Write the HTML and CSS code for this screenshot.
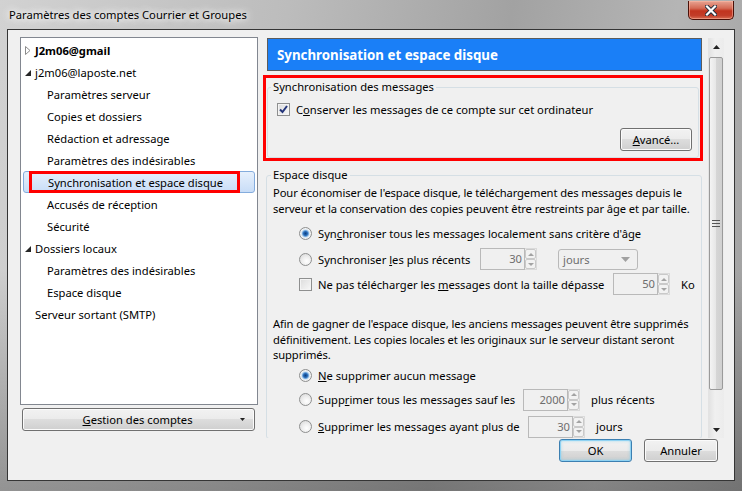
FILE: index.html
```html
<!DOCTYPE html>
<html lang="fr">
<head>
    <meta charset="UTF-8">
    <title>Paramètres des comptes Courrier et Groupes</title>
    <link rel="stylesheet" href="styles.css">
</head>
<body>
<div class="window">
    <!-- Title bar -->
    <div class="titlebar">
        <span class="title">Paramètres des comptes Courrier et Groupes</span>
        <div class="close-btn">
            <svg width="12" height="11" viewBox="0 0 12 11">
                <path d="M2 1.5 L10 9.5 M10 1.5 L2 9.5" stroke="#1e2a3a" stroke-width="4" stroke-linecap="square"/>
                <path d="M2 1.5 L10 9.5 M10 1.5 L2 9.5" stroke="#fff" stroke-width="2.2" stroke-linecap="square"/>
            </svg>
        </div>
    </div>

    <div class="client">
        <div class="main">
            <!-- Left side: account tree -->
            <div class="left-side">
                <ul class="tree">
                    <li class="row lvl0 bold">
                        <svg class="twisty" width="6" height="9" viewBox="0 0 6 9"><path d="M0.5 0.5 L5 4.5 L0.5 8.5 Z" fill="#fff" stroke="#8c8c8c"/></svg>
                        J2m06@gmail
                    </li>
                    <li class="row lvl0">
                        <svg class="twisty" width="6" height="9" viewBox="0 0 6 9"><path d="M6 2 L6 8 L0 8 Z" fill="#262626"/></svg>
                        j2m06@laposte.net
                    </li>
                    <li class="row lvl1">Paramètres serveur</li>
                    <li class="row lvl1">Copies et dossiers</li>
                    <li class="row lvl1">Rédaction et adressage</li>
                    <li class="row lvl1">Paramètres des indésirables</li>
                    <li class="row selected"><span class="mark">Synchronisation et espace disque</span></li>
                    <li class="row lvl1">Accusés de réception</li>
                    <li class="row lvl1">Sécurité</li>
                    <li class="row lvl0">
                        <svg class="twisty" width="6" height="9" viewBox="0 0 6 9"><path d="M6 2 L6 8 L0 8 Z" fill="#262626"/></svg>
                        Dossiers locaux
                    </li>
                    <li class="row lvl1">Paramètres des indésirables</li>
                    <li class="row lvl1">Espace disque</li>
                    <li class="row lvl0 plain">Serveur sortant (SMTP)</li>
                </ul>
                <button class="btn menu-btn">
                    <span class="menu-label"><u>G</u>estion des comptes</span>
                    <svg width="5" height="3" viewBox="0 0 5 3"><path d="M0 0 L5 0 L2.5 3 Z" fill="#222"/></svg>
                </button>
            </div>

            <!-- Right side: settings pane -->
            <div class="right-side">
                <div class="pane">
                    <div class="pane-header">Synchronisation et espace disque</div>

                    <div class="highlight-box">
                        <fieldset class="group sync">
                            <legend>Synchronisation des messages</legend>
                            <div class="opt-row short">
                                <span class="checkbox checked">
                                    <svg width="11" height="11" viewBox="0 0 11 11"><path d="M2 5.5 L4.5 8 L9 2" fill="none" stroke="#24357a" stroke-width="2"/></svg>
                                </span>
                                <span>C<u>o</u>nserver les messages de ce compte sur cet ordinateur</span>
                            </div>
                            <div class="btn-row">
                                <button class="btn adv-btn"><u>A</u>vancé...</button>
                            </div>
                        </fieldset>
                    </div>

                    <fieldset class="group disk">
                        <legend>Espace disque</legend>
                        <p class="desc">Pour économiser de l'espace disque, le téléchargement des messages depuis le<br>serveur et la conservation des copies peuvent être restreints par âge et par taille.</p>
                        <div class="options">
                            <div class="opt-row r1">
                                <span class="radio checked"></span>
                                <span>Syn<u>c</u>hroniser tous les messages localement sans critère d'âge</span>
                            </div>
                            <div class="opt-row r2">
                                <span class="radio"></span>
                                <span class="lbl w-recent">Synchroniser <u>l</u>es plus récents</span>
                                <div class="spin"><span class="spin-val">30</span><span class="spin-btns"><span class="sb up"></span><span class="sb down"></span></span></div>
                                <div class="select"><span>jours</span><svg width="9" height="5" viewBox="0 0 9 5"><path d="M0 0 L9 0 L4.5 5 Z" fill="#a0a0a0"/></svg></div>
                            </div>
                            <div class="opt-row r3">
                                <span class="checkbox"></span>
                                <span class="lbl w-size">Ne pas télécharger les <u>m</u>essages dont la taille dépasse</span>
                                <div class="spin"><span class="spin-val">50</span><span class="spin-btns"><span class="sb up"></span><span class="sb down"></span></span></div>
                                <span class="unit">Ko</span>
                            </div>
                        </div>
                        <p class="desc desc2">Afin de gagner de l'espace disque, les anciens messages peuvent être supprimés<br>définitivement. Les copies locales et les originaux sur le serveur distant seront<br>supprimés.</p>
                        <div class="options">
                            <div class="opt-row d1">
                                <span class="radio checked"></span>
                                <span><u>N</u>e supprimer aucun message</span>
                            </div>
                            <div class="opt-row d2">
                                <span class="radio"></span>
                                <span class="lbl w-keep">Supp<u>r</u>imer tous les messages sauf les</span>
                                <div class="spin"><span class="spin-val">2000</span><span class="spin-btns"><span class="sb up"></span><span class="sb down"></span></span></div>
                                <span class="unit">plus récents</span>
                            </div>
                            <div class="opt-row d3">
                                <span class="radio"></span>
                                <span class="lbl w-older"><u>S</u>upprimer les messages ayant plus de</span>
                                <div class="spin"><span class="spin-val">30</span><span class="spin-btns"><span class="sb up"></span><span class="sb down"></span></span></div>
                                <span class="unit">jours</span>
                            </div>
                        </div>
                    </fieldset>
                </div>

                <div class="scrollbar">
                    <div class="sc-btn"><svg width="7" height="4" viewBox="0 0 7 4"><path d="M0 4 L7 4 L3.5 0 Z" fill="#222"/></svg></div>
                    <div class="thumb">
                        <svg width="8" height="7" viewBox="0 0 8 7"><path d="M0 0.5 H8 M0 3.5 H8 M0 6.5 H8" stroke="#555"/></svg>
                    </div>
                    <div class="sc-btn"><svg width="7" height="4" viewBox="0 0 7 4"><path d="M0 0 L7 0 L3.5 4 Z" fill="#222"/></svg></div>
                </div>
            </div>
        </div>

        <div class="footer">
            <button class="btn default ok-btn">OK</button>
            <button class="btn cancel-btn">Annuler</button>
        </div>
    </div>
</div>
</body>
</html>
```

FILE: styles.css
```css
html, body {
    margin: 0;
    padding: 0;
}

body {
    width: 742px;
    height: 491px;
    overflow: hidden;
    font-family: "Noto Sans", "Open Sans", sans-serif;
    font-size: 11.2px;
    color: #000;
}

.window {
    height: 491px;
    display: flex;
    flex-direction: column;
    background:
        linear-gradient(to bottom, rgba(0, 0, 0, 0) 55%, rgba(0, 0, 0, 0.28) 100%),
        linear-gradient(100deg, #d2d2d2 0%, #bcbcbc 35%, #a2a2a2 62%, #b5b5b5 82%, #9e9e9e 100%);
}

/* title bar */
.titlebar {
    height: 29px;
    display: flex;
    align-items: flex-start;
    justify-content: space-between;
}

.title {
    margin: 7px 0 0 9px;
    line-height: 15px;
    text-shadow: 0 0 6px #fff, 0 0 10px #fff, 0 0 14px rgba(255, 255, 255, 0.9);
}

.close-btn {
    width: 46px;
    height: 19px;
    margin: 1px 8px 0 0;
    box-sizing: border-box;
    border: 1px solid #4a1008;
    border-top: none;
    border-radius: 0 0 5px 5px;
    background: linear-gradient(to bottom, #e8a493 0%, #d46a55 40%, #c2341f 55%, #c23c28 80%, #d76c52 100%);
    box-shadow: inset 0 0 0 1px rgba(255, 190, 170, 0.5);
    display: flex;
    align-items: center;
    justify-content: center;
}

/* dialog body */
.client {
    margin: 0 7px 10px 7px;
    height: 452px;
    box-sizing: border-box;
    border: 1px solid #353535;
    background-color: #f0f0f0;
    display: flex;
    flex-direction: column;
}

.main {
    display: flex;
    padding: 7px 0 0 12px;
    height: 401px;
    box-sizing: border-box;
}

.left-side {
    width: 238px;
    display: flex;
    flex-direction: column;
}

.tree {
    list-style: none;
    margin: 0;
    padding: 1px 1px;
    height: 372px;
    box-sizing: border-box;
    border: 1px solid #828790;
    background-color: #fff;
}

.row {
    height: 22px;
    display: flex;
    align-items: center;
    white-space: nowrap;
    box-sizing: border-box;
}

.row.lvl0 {
    padding-left: 3px;
}

.row.lvl0.plain {
    padding-left: 13px;
}

.row.lvl1 {
    padding-left: 25px;
}

.row.bold {
    font-weight: bold;
}

.twisty {
    margin-right: 4px;
    flex-shrink: 0;
}

.row.selected {
    margin: 0 1px;
    border: 1px solid #84acdd;
    border-radius: 3px;
    background: linear-gradient(to bottom, #e6f0fc, #c8ddf7);
}

.mark {
    margin-left: 5px;
    width: 211px;
    height: 22px;
    box-sizing: border-box;
    border: 3px solid #ff0000;
    padding-left: 16px;
    display: flex;
    align-items: center;
}

/* buttons */
.btn {
    font: inherit;
    color: #000;
    border: 1px solid #707070;
    border-radius: 3px;
    background: linear-gradient(to bottom, #f2f2f2 0%, #ebebeb 50%, #dddddd 50%, #cfcfcf 100%);
    box-shadow: inset 0 0 0 1px #fbfbfb;
    padding: 0;
    box-sizing: border-box;
    height: 23px;
}

.btn.default {
    border-color: #3c7fb1;
    box-shadow: inset 0 0 0 1px #8fd2f2, inset 0 0 3px 1px rgba(100, 200, 240, 0.5);
}

.menu-btn {
    margin: 3px 3px 0 2px;
    display: flex;
    align-items: center;
}

.menu-label {
    flex: 1;
    text-align: center;
    padding-left: 12px;
}

.menu-btn svg {
    margin-right: 9px;
}

/* right pane */
.right-side {
    margin: 1px 0 0 5px;
    display: flex;
}

.pane {
    width: 441px;
    height: 400px;
    overflow: hidden;
}

.pane-header {
    margin-left: 4px;
    width: 435px;
    height: 33px;
    box-sizing: border-box;
    border: 1px solid #5c5c5c;
    background-color: #1a7ff7;
    color: #fff;
    font-size: 13.3px;
    font-weight: bold;
    padding-left: 9px;
    display: flex;
    align-items: center;
}

.highlight-box {
    margin-top: 4px;
    width: 440px;
    height: 86px;
    box-sizing: border-box;
    border: 3px solid #ff0000;
}

.group {
    margin: 0;
    padding: 0;
    min-width: 0;
    border: 1px solid #d5dfe5;
    border-radius: 3px;
}

.group legend {
    padding: 0 2px;
    line-height: 14px;
}

.group.sync {
    margin: 2px 1px 0 1px;
    padding: 7px 6px 6px 9px;
}

.group.sync legend {
    margin-left: -6px;
}

.group.disk {
    margin: 7px 2px 0 3px;
    padding: 3px 6px 0 6px;
}

.group.disk legend {
    margin-left: -2px;
}

.desc {
    margin: 0;
    line-height: 16px;
    white-space: nowrap;
    letter-spacing: -0.1px;
}

.desc2 {
    margin-top: 21px;
    line-height: 15.5px;
}

.options {
    margin-left: 26px;
}

.opt-row {
    display: flex;
    align-items: center;
    height: 22px;
    white-space: nowrap;
}

.opt-row.short {
    height: 16px;
}

.r1 { margin-top: 5px; }
.r2 { margin-top: 4px; }
.r3 { margin-top: 3px; }
.d1 { margin-top: 2px; }
.d2 { margin-top: 2px; }
.d3 { margin-top: 5px; }

.lbl { display: inline-block; }
.w-recent { width: 162px; }
.w-size { width: 295px; }
.w-keep { width: 205px; }
.w-older { width: 210px; }

.btn-row {
    display: flex;
    justify-content: flex-end;
    margin-top: 11px;
}

.adv-btn {
    width: 72px;
}

/* check boxes and radios */
.checkbox {
    width: 13px;
    height: 13px;
    box-sizing: border-box;
    border: 1px solid #8e8f8f;
    background: linear-gradient(135deg, #dcdcdc, #f8f8f8);
    box-shadow: inset 0 0 0 1px #f4f4f4;
    margin-right: 6px;
    flex-shrink: 0;
    display: flex;
    align-items: center;
    justify-content: center;
}

.radio {
    width: 13px;
    height: 13px;
    box-sizing: border-box;
    border: 1px solid #8e8f8f;
    border-radius: 50%;
    background: radial-gradient(circle at 60% 65%, #fff 0, #f0f0f0 40%, #d4d4d4 100%);
    margin-right: 6px;
    flex-shrink: 0;
}

.radio.checked {
    background: radial-gradient(circle at 50% 50%, #0e3f7c 0, #2a6cb9 2px, #72a8dc 3px, #d8e6f2 4px, #f4f4f4 5px, #dedede 6px);
}

/* spin fields */
.spin {
    display: flex;
    height: 22px;
    width: 57px;
    flex-shrink: 0;
}

.spin-val {
    flex: 1;
    border: 1px solid #b9b9b9;
    color: #6d6d6d;
    text-align: right;
    padding-right: 2px;
    line-height: 20px;
}

.spin-btns {
    width: 11px;
    display: flex;
    flex-direction: column;
    border: 1px solid #dadada;
    border-left: none;
    background-color: #f2f2f2;
}

.sb {
    flex: 1;
    border: 1px solid #c9c9c9;
    border-radius: 2px;
    display: flex;
    align-items: center;
    justify-content: center;
}

.sb.up::before {
    content: "";
    border: 3px solid transparent;
    border-top: none;
    border-bottom: 3px solid #a3a3a3;
}

.sb.down::before {
    content: "";
    border: 3px solid transparent;
    border-bottom: none;
    border-top: 3px solid #a3a3a3;
}

.select {
    margin-left: 21px;
    width: 80px;
    height: 21px;
    box-sizing: border-box;
    border: 1px solid #b9b9b9;
    border-radius: 3px;
    color: #6d6d6d;
    display: flex;
    align-items: center;
    justify-content: space-between;
    padding: 0 7px 0 4px;
}

.unit {
    margin-left: 11px;
}

/* scrollbar */
.scrollbar {
    margin-left: 4px;
    width: 16px;
    height: 400px;
    box-sizing: border-box;
    border-left: 1px solid #e3e3e3;
    background: linear-gradient(to right, #e2e2e2, #f0f0f0 40%, #ececec);
    display: flex;
    flex-direction: column;
}

.sc-btn {
    height: 17px;
    display: flex;
    align-items: center;
    justify-content: center;
}

.thumb {
    margin: 2px 1px 0 0;
    height: 333px;
    box-sizing: border-box;
    border: 1px solid #9a9a9a;
    border-radius: 2px;
    background: linear-gradient(to right, #f4f4f4, #e6e6e6 50%, #d6d6d6 50%, #d0d0d0);
    display: flex;
    align-items: center;
    justify-content: center;
}

.scrollbar .sc-btn:last-child {
    margin-top: auto;
}

/* dialog buttons */
.footer {
    display: flex;
    justify-content: flex-end;
    gap: 12px;
    margin-top: 8px;
    padding-right: 16px;
}

.ok-btn {
    width: 73px;
}

.cancel-btn {
    width: 74px;
}
```
